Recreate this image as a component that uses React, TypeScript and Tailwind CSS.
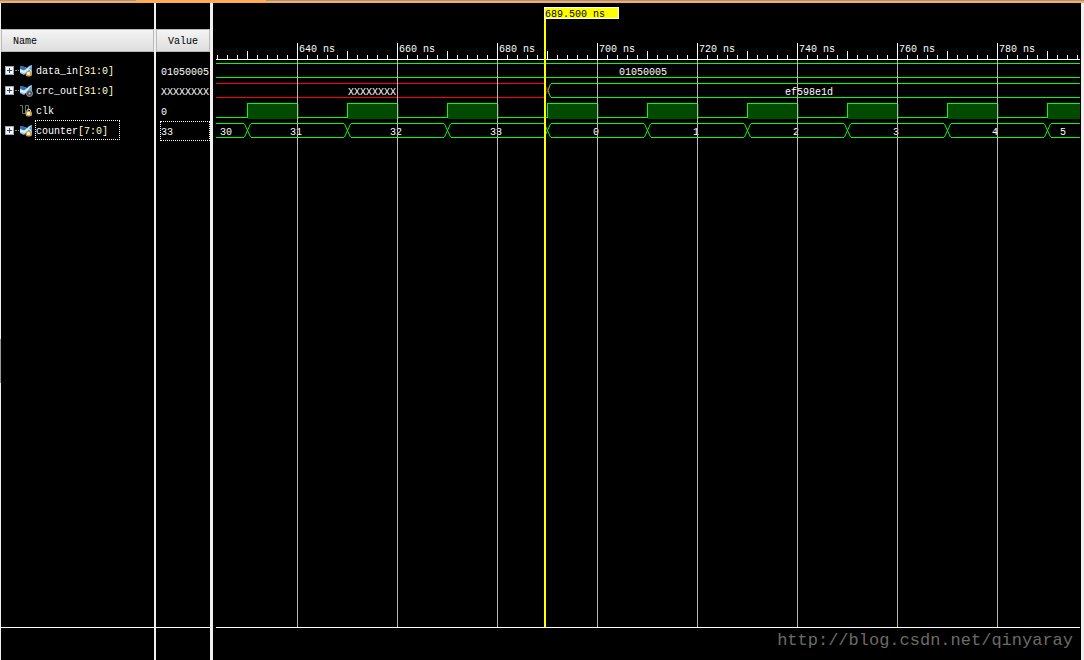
import type { ReactNode } from "react";

// ─── Data ────────────────────────────────────────────────────────────────────

type Signal = {
  name: string;
  range: string;
  value: string;
  kind: "input" | "output" | "clock";
  selected?: boolean;
};

const SIGNALS: Signal[] = [
  { name: "data_in", range: "[31:0]", value: "01050005", kind: "input" },
  { name: "crc_out", range: "[31:0]", value: "XXXXXXXX", kind: "output" },
  { name: "clk", range: "", value: "0", kind: "clock" },
  { name: "counter", range: "[7:0]", value: "33", kind: "input", selected: true },
];

// one tick is 10px, one clock period is 100px
const MAJOR_TICKS = [640, 660, 680, 700, 720, 740, 760, 780];
const FIRST_MAJOR = 84;
const PERIOD = 100;
const FIRST_EDGE = 34;
const CURSOR = 332;

const GREEN = "#00ff00";
const RED = "#ff0000";

const COUNTER_LABELS = [
  { x: 7, text: "30" },
  { x: 77, text: "31" },
  { x: 177, text: "32" },
  { x: 277, text: "33" },
  { x: 380, text: "0" },
  { x: 480, text: "1" },
  { x: 580, text: "2" },
  { x: 680, text: "3" },
  { x: 779, text: "4" },
  { x: 847, text: "5" },
];

// ─── Icons ───────────────────────────────────────────────────────────────────

function ExpandIcon() {
  return (
    <svg width="9" height="9" viewBox="0 0 9 9" shapeRendering="crispEdges">
      <rect width="9" height="9" fill="#a4a8b4" />
      <rect x="1" y="1" width="7" height="7" fill="#f8f8f8" />
      <path d="M2 4h5v1H2zM4 2h1v5H4z" fill="#2a3f9f" />
    </svg>
  );
}

function Badge({ kind }: { kind: Signal["kind"] }) {
  if (kind === "output") {
    return (
      <g>
        <circle cx="9.5" cy="8.5" r="3" fill="#4a4a4a" stroke="#9c9c9c" />
        <circle cx="9.5" cy="8.5" r="1" fill="#d0d0d0" />
      </g>
    );
  }
  return (
    <g>
      <path d="M7 7V6a1.8 1.8 0 0 1 3.600 0V7" fill="none" stroke="#e4e4e4" />
      <rect x="5.500" y="6" width="6.500" height="5.500" rx="2.500" fill="#c9a24e" />
      <rect x="7" y="7" width="3" height="3" rx="1" fill="#fff3c4" />
    </g>
  );
}

function SignalIcon({ kind }: { kind: Signal["kind"] }) {
  return (
    <svg width="13" height="12" viewBox="0 0 13 12">
      {kind === "clock" ? (
        <path d="M0 .5h2.500v8h3v-8h3v5" fill="none" stroke="#5d7a50" />
      ) : (
        <g>
          <path d="M0 1l5 1 2 1 2-2 3-1v8l-3 2-3-2-2 2-4-2z" fill="#8fc8ec" />
          <path d="M0 1l5 1 2 2-3 2-4-2z" fill="#2874b4" />
          <path d="M7 4l5-3v5l-3 1z" fill="#5aa6dc" />
          <path d="M0 4l4 1.500 3-2 4-2.500-3 4-3 3-5-1z" fill="#d9effc" />
        </g>
      )}
      <Badge kind={kind} />
    </svg>
  );
}

// ─── Name and value columns ──────────────────────────────────────────────────

function Column({
  title,
  className,
  listClass,
  children,
}: {
  title: string;
  className: string;
  listClass: string;
  children: ReactNode;
}) {
  return (
    <section className={`flex shrink-0 flex-col ${className}`}>
      <h2 className="mt-[26px] flex h-[23px] items-center border border-[#b9b9b9] bg-linear-to-b from-[#f4f4f4] to-[#dedee0] pt-0.5 pl-[11px] text-black">
        {title}
      </h2>
      <ul className={`flex-1 ${listClass}`}>{children}</ul>
      <div className="h-[33px] border-t border-white" />
    </section>
  );
}

function NameRow({ signal }: { signal: Signal }) {
  const outline = signal.selected ? "border-white" : "border-transparent";
  return (
    <li className="flex h-5 items-start pl-1">
      {signal.kind === "clock" ? (
        <span className="w-[15px]" />
      ) : (
        <button
          type="button"
          aria-label={`Expand ${signal.name}`}
          className="mt-1.5 flex w-[15px] items-center"
        >
          <ExpandIcon />
          <span className="ml-px w-1 border-t border-dotted border-[#888]" />
        </button>
      )}
      <span className="mt-[5px]">
        <SignalIcon kind={signal.kind} />
      </span>
      <span className={`ml-0.5 flex h-5 items-center border border-dotted pt-1 pr-[11px] ${outline}`}>
        {signal.name}
        <span className="text-[#ffffd0]">{signal.range}</span>
      </span>
    </li>
  );
}

function ValueRow({ signal }: { signal: Signal }) {
  const outline = signal.selected ? "border-white" : "border-transparent";
  return (
    <li className="ml-1 flex h-5 items-center">
      <span className={`flex h-5 flex-1 items-center border border-dotted pt-1 ${outline}`}>
        {signal.value}
      </span>
    </li>
  );
}

// ─── Waveforms ───────────────────────────────────────────────────────────────

function Ruler() {
  const ticks = Array.from({ length: 300 }, (_, i) => 4 + i * 10);
  return (
    <g stroke="#fff">
      {ticks.map((x) => {
        const half = (x - FIRST_EDGE) % PERIOD === 0;
        return <line key={x} x1={x + 0.5} x2={x + 0.5} y1={half ? 48 : 52} y2={56} />;
      })}
      <line x1="3" x2="100%" y1="56.5" y2="56.5" />
    </g>
  );
}

function Clock() {
  const pulses = Array.from({ length: 30 }, (_, i) => FIRST_EDGE + i * PERIOD);
  return (
    <g fill="none" stroke={GREEN}>
      <line x1="3" x2={FIRST_EDGE} y1="114.5" y2="114.5" />
      {pulses.map((x) => (
        <g key={x}>
          <rect x={x + 1} y="101" width="51" height="15" fill="#004b00" stroke="none" />
          <path d={`M${x + 0.5} 115V100.500H${x + 50.5}V114.500H${x + PERIOD}`} />
        </g>
      ))}
    </g>
  );
}

function CounterBus() {
  const edges = Array.from({ length: 30 }, (_, i) => FIRST_EDGE + i * PERIOD);
  return (
    <g fill="none" stroke={GREEN}>
      <path d={`M3 120.500H${FIRST_EDGE - 3}M3 134.500H${FIRST_EDGE - 3}`} />
      {edges.map((x) => (
        <g key={x}>
          <path
            d={`M${x - 2.5} 121L${x + 3.5} 134M${x - 2.5} 134L${x + 3.5} 121`}
            shapeRendering="auto"
          />
          <path d={`M${x + 4} 120.500H${x + PERIOD - 3}M${x + 4} 134.500H${x + PERIOD - 3}`} />
        </g>
      ))}
    </g>
  );
}

function Waveforms() {
  return (
    <svg className="h-full w-full font-[inherit]" shapeRendering="crispEdges">
      <Ruler />

      {/* data_in */}
      <g stroke={GREEN}>
        <line x1="3" x2="100%" y1="60.5" y2="60.5" />
        <line x1="3" x2="100%" y1="74.5" y2="74.5" />
      </g>

      {/* crc_out, unknown until the cursor */}
      <path d={`M3 80.500H${CURSOR}M3 94.500H${CURSOR}`} stroke={RED} />
      <path d="M333 84l3 7M336 84l-3 7" stroke={RED} shapeRendering="auto" />
      <g stroke={GREEN} fill="none">
        <path d="M337.500 81L335 87.500L337.500 94" shapeRendering="auto" />
        <line x1="338" x2="100%" y1="80.5" y2="80.5" />
        <line x1="338" x2="100%" y1="94.5" y2="94.5" />
      </g>

      <Clock />
      <CounterBus />

      <g fill="#fff">
        <text x="406" y="72">01050005</text>
        <text x="135" y="92">XXXXXXXX</text>
        <text x="572" y="92">ef598e1d</text>
        {COUNTER_LABELS.map((label) => (
          <text key={label.text} x={label.x} y="132">
            {label.text}
          </text>
        ))}
      </g>

      {MAJOR_TICKS.map((time, i) => {
        const x = FIRST_MAJOR + i * PERIOD;
        return (
          <g key={time}>
            <rect x={x} y="57" width="1" height="567" fill="#b8b8b8" />
            <rect x={x} y="40" width="1" height="17" fill="#fff" />
            <text x={x + 2} y="49" fill="#fff">
              {time} ns
            </text>
          </g>
        );
      })}
      <line x1="3" x2="100%" y1="624.5" y2="624.5" stroke="#fff" />

      {/* cursor */}
      <rect x={CURSOR - 1} y="4" width="2" height="620" fill="#ff0" />
      <rect x={CURSOR - 0.5} y="4.500" width="74" height="11" fill="#ff0" stroke="#fff" />
      <text x={CURSOR} y="14" fill="#000">
        689.500 ns
      </text>
    </svg>
  );
}

// ─── App ─────────────────────────────────────────────────────────────────────

export default function App() {
  return (
    <div className="flex min-h-screen flex-col bg-black font-['Liberation_Mono',monospace] text-[10px] leading-5 text-white">
      <div className="flex h-[3px] bg-[#ffaa55]">
        <div className="h-px w-[136px] bg-[#999]" />
        <div className="ml-[130px] h-px flex-1 bg-[#999]" />
      </div>
      <main className="flex flex-1">
        <div className="w-px bg-[#f0f0f0] pt-[336px]">
          <div className="h-11 bg-[#999]" />
        </div>
        <Column title="Name" className="w-[153px]" listClass="mt-2">
          {SIGNALS.map((signal) => (
            <NameRow key={signal.name} signal={signal} />
          ))}
        </Column>
        <div className="w-0.5 bg-[#f0f0f0]" />
        <Column title="Value" className="w-[54px]" listClass="mt-[9px]">
          {SIGNALS.map((signal) => (
            <ValueRow key={signal.name} signal={signal} />
          ))}
        </Column>
        <div className="w-[3px] bg-[#f0f0f0]" />
        <section className="relative min-w-0 flex-1 border-r-[3px] border-[#f0f0f0] pr-px">
          <Waveforms />
          <p className="absolute right-2 bottom-[7px] text-[17px] leading-6 text-[#6b6b66]">
            http://blog.csdn.net/qinyaray
          </p>
        </section>
      </main>
    </div>
  );
}
